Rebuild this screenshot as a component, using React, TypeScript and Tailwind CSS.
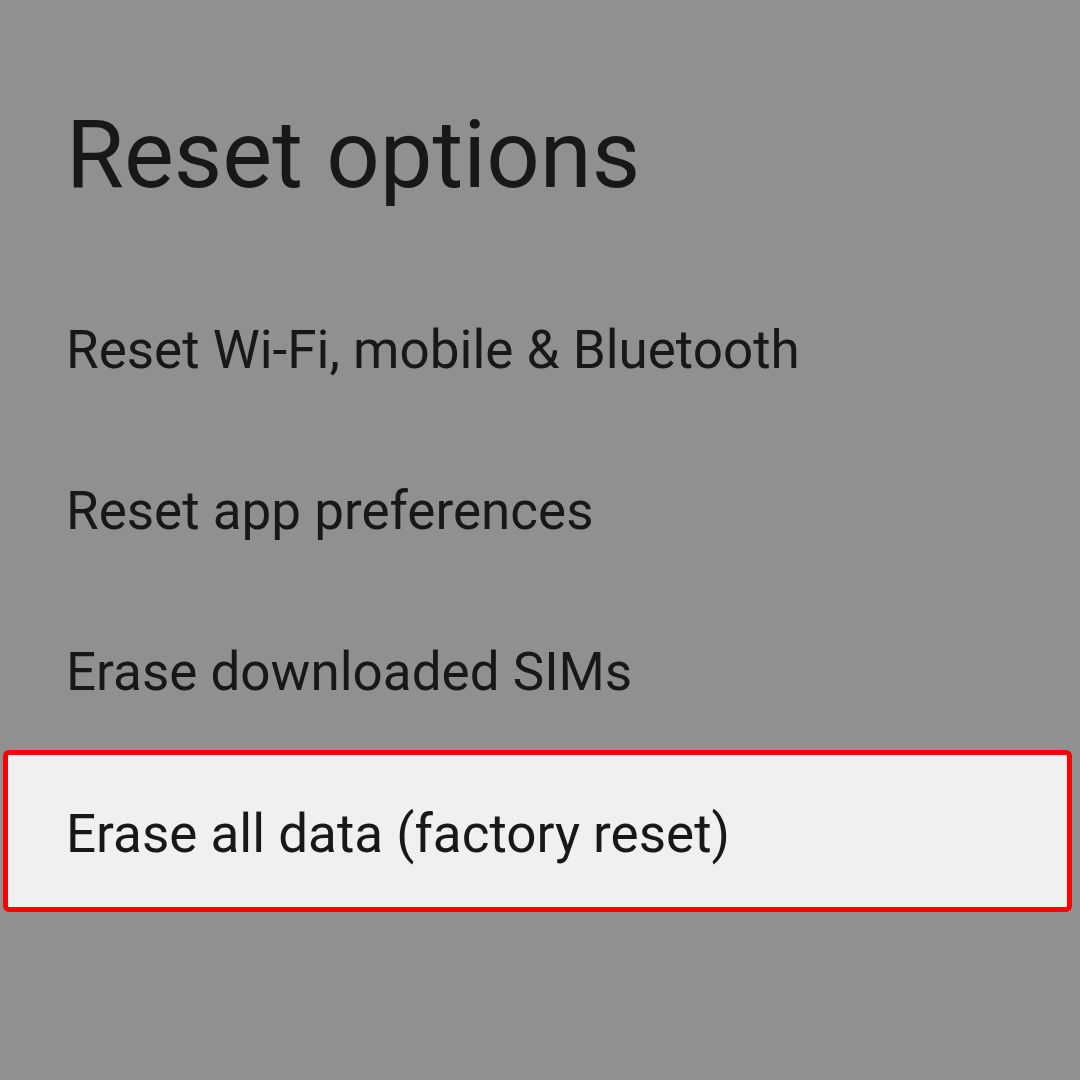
const items = [
  'Reset Wi-Fi, mobile & Bluetooth',
  'Reset app preferences',
  'Erase downloaded SIMs',
];

export default function App() {
  return (
    <div className="h-[1080px] w-[1080px] overflow-hidden bg-[#8f908f] font-['Roboto',sans-serif] text-[#171817]">
      {/* Header */}
      <div className="h-[269px] pl-[66px] pt-[99px]">
        <h1 className="text-[94px] leading-[112px] font-normal">Reset options</h1>
      </div>

      {/* Options */}
      <div className="flex flex-col">
        {items.map((item) => (
          <div key={item} className="flex h-[161px] items-center pl-[66px]">
            <span className="text-[53px] leading-[64px]">{item}</span>
          </div>
        ))}
        <div className="ml-[3px] mr-[8px] -mt-[2px] flex h-[162px] items-center rounded-[6px] border-[5px] border-[#ff0000] bg-[#eff0ef] pl-[58px] pt-[6px]">
          <span className="text-[53px] leading-[64px]">Erase all data (factory reset)</span>
        </div>
      </div>
    </div>
  );
}
